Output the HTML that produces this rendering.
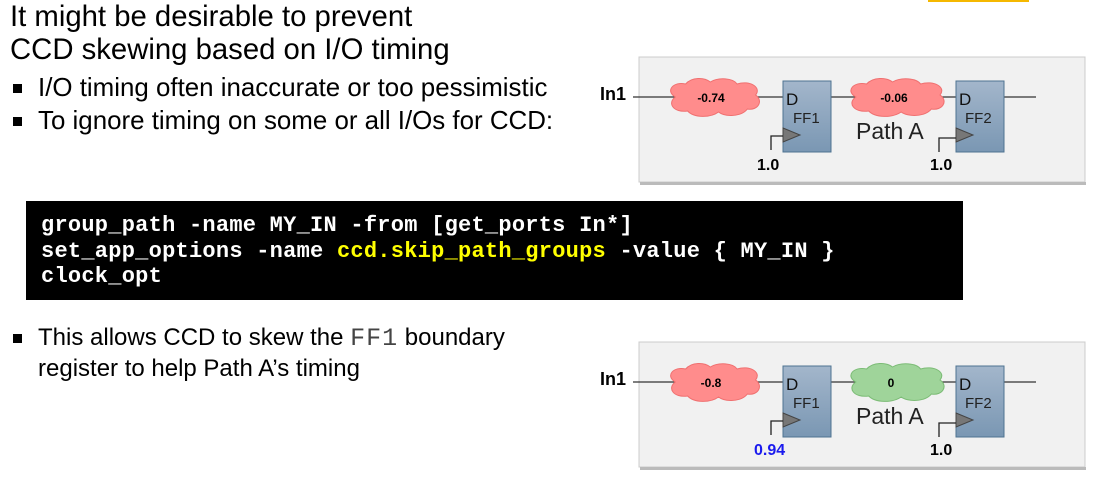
<!DOCTYPE html>
<html><head><meta charset="utf-8"><style>
body{margin:0;width:1096px;height:479px;background:#fff;position:relative;overflow:hidden;font-family:"Liberation Sans",sans-serif;color:#000}
.t{position:absolute;left:10px;font-size:29.3px;line-height:33px}
.b{position:absolute;font-size:25.9px;line-height:30px}
.sq{position:absolute;width:9px;height:9px;background:#000}
.code{position:absolute;left:26px;top:201px;width:937px;height:99px;background:#000;color:#fff;font-family:"Liberation Mono",monospace;font-weight:bold;font-size:22px;line-height:25.5px;box-sizing:border-box;padding:12px 0 0 15px;white-space:pre;letter-spacing:0.25px}
.y{color:#ff0}
svg{position:absolute;left:0;top:0}
</style></head><body>
<div style="position:absolute;left:928px;top:0;width:101px;height:2px;background:#f5b800"></div>
<div class="t" style="top:0px">It might be desirable to prevent<br>CCD skewing based on I/O timing</div>
<div class="sq" style="left:13px;top:84px"></div>
<div class="b" style="left:38px;top:73px">I/O timing often inaccurate or too pessimistic</div>
<div class="sq" style="left:13px;top:117px"></div>
<div class="b" style="left:38px;top:106px">To ignore timing on some or all I/Os for CCD:</div>
<div class="code">group_path -name MY_IN -from [get_ports In*]
set_app_options -name <span class="y">ccd.skip_path_groups</span> -value { MY_IN }
clock_opt</div>
<div class="sq" style="left:13px;top:334px"></div>
<div class="b" style="left:38px;top:323px;font-size:24px">This allows CCD to skew the <span style="font-family:'Liberation Mono',monospace;font-size:25px;letter-spacing:1px;color:#444">FF1</span> boundary<br>register to help Path A’s timing</div>
<svg width="1096" height="479">
<defs>
<linearGradient id="ff" x1="0" y1="0" x2="0" y2="1"><stop offset="0" stop-color="#a3b6cb"/><stop offset="1" stop-color="#7a97b3"/></linearGradient>
<g id="cloud"><path d="M10,20 C0,14 8,4 20,7 C26,0 38,0 44,5 C52,0 66,1 70,7 C82,3 94,10 88,18 C96,24 90,34 80,32 C74,40 58,40 52,35 C44,41 28,41 22,34 C8,36 2,26 10,20 Z"/></g>
<g id="diag">
<rect x="639" y="57" width="446" height="125" fill="#f1f1f1" stroke="#ccc"/>
<rect x="640" y="182" width="446" height="3" fill="#bbb"/>
<line x1="633" y1="97" x2="1036" y2="97" stroke="#333" stroke-width="1.3"/>
<text x="600" y="100" font-weight="bold" font-size="18">In1</text>
<rect x="783" y="81" width="48" height="71" fill="url(#ff)" stroke="#4e7391"/>
<rect x="956" y="81" width="48" height="71" fill="url(#ff)" stroke="#4e7391"/>
<text x="786" y="105" font-size="17" fill="#111">D</text>
<text x="793" y="123" font-size="15" fill="#222">FF1</text>
<text x="959" y="105" font-size="17" fill="#111">D</text>
<text x="965" y="123" font-size="15" fill="#222">FF2</text>
<polygon points="783,128 800,135 783,142" fill="#777" stroke="#444"/>
<polygon points="956,128 973,135 956,142" fill="#777" stroke="#444"/>
<polyline points="783,136 771,136 771,150" fill="none" stroke="#222" stroke-width="1.3"/>
<polyline points="956,138 939,138 939,152" fill="none" stroke="#222" stroke-width="1.3"/>
<text x="856" y="139" font-size="23" fill="#222">Path A</text>
</g>
</defs>
<use href="#diag"/>
<g fill="#ff8c8c" stroke="#f07070"><use href="#cloud" transform="translate(665,77) scale(1.03,1)"/><use href="#cloud" transform="translate(845,77) scale(1.08,1)"/></g>
<text x="711" y="102" font-size="12" font-weight="bold" text-anchor="middle">-0.74</text>
<text x="894" y="102" font-size="12" font-weight="bold" text-anchor="middle">-0.06</text>
<text x="757" y="170" font-size="16" font-weight="bold">1.0</text>
<text x="930" y="170" font-size="16" font-weight="bold">1.0</text>
<g transform="translate(0,285)"><use href="#diag"/>
<g><use href="#cloud" fill="#ff8c8c" stroke="#f07070" transform="translate(665,77) scale(1.03,1)"/><use href="#cloud" fill="#9fd49a" stroke="#7cbc76" transform="translate(845,77) scale(1.08,1)"/></g>
<text x="711" y="102" font-size="12" font-weight="bold" text-anchor="middle">-0.8</text>
<text x="891" y="102" font-size="12" font-weight="bold" text-anchor="middle">0</text>
<text x="754" y="170" font-size="16" font-weight="bold" fill="#1a1aee">0.94</text>
<text x="930" y="170" font-size="16" font-weight="bold">1.0</text>
</g>
</svg>
</body></html>
